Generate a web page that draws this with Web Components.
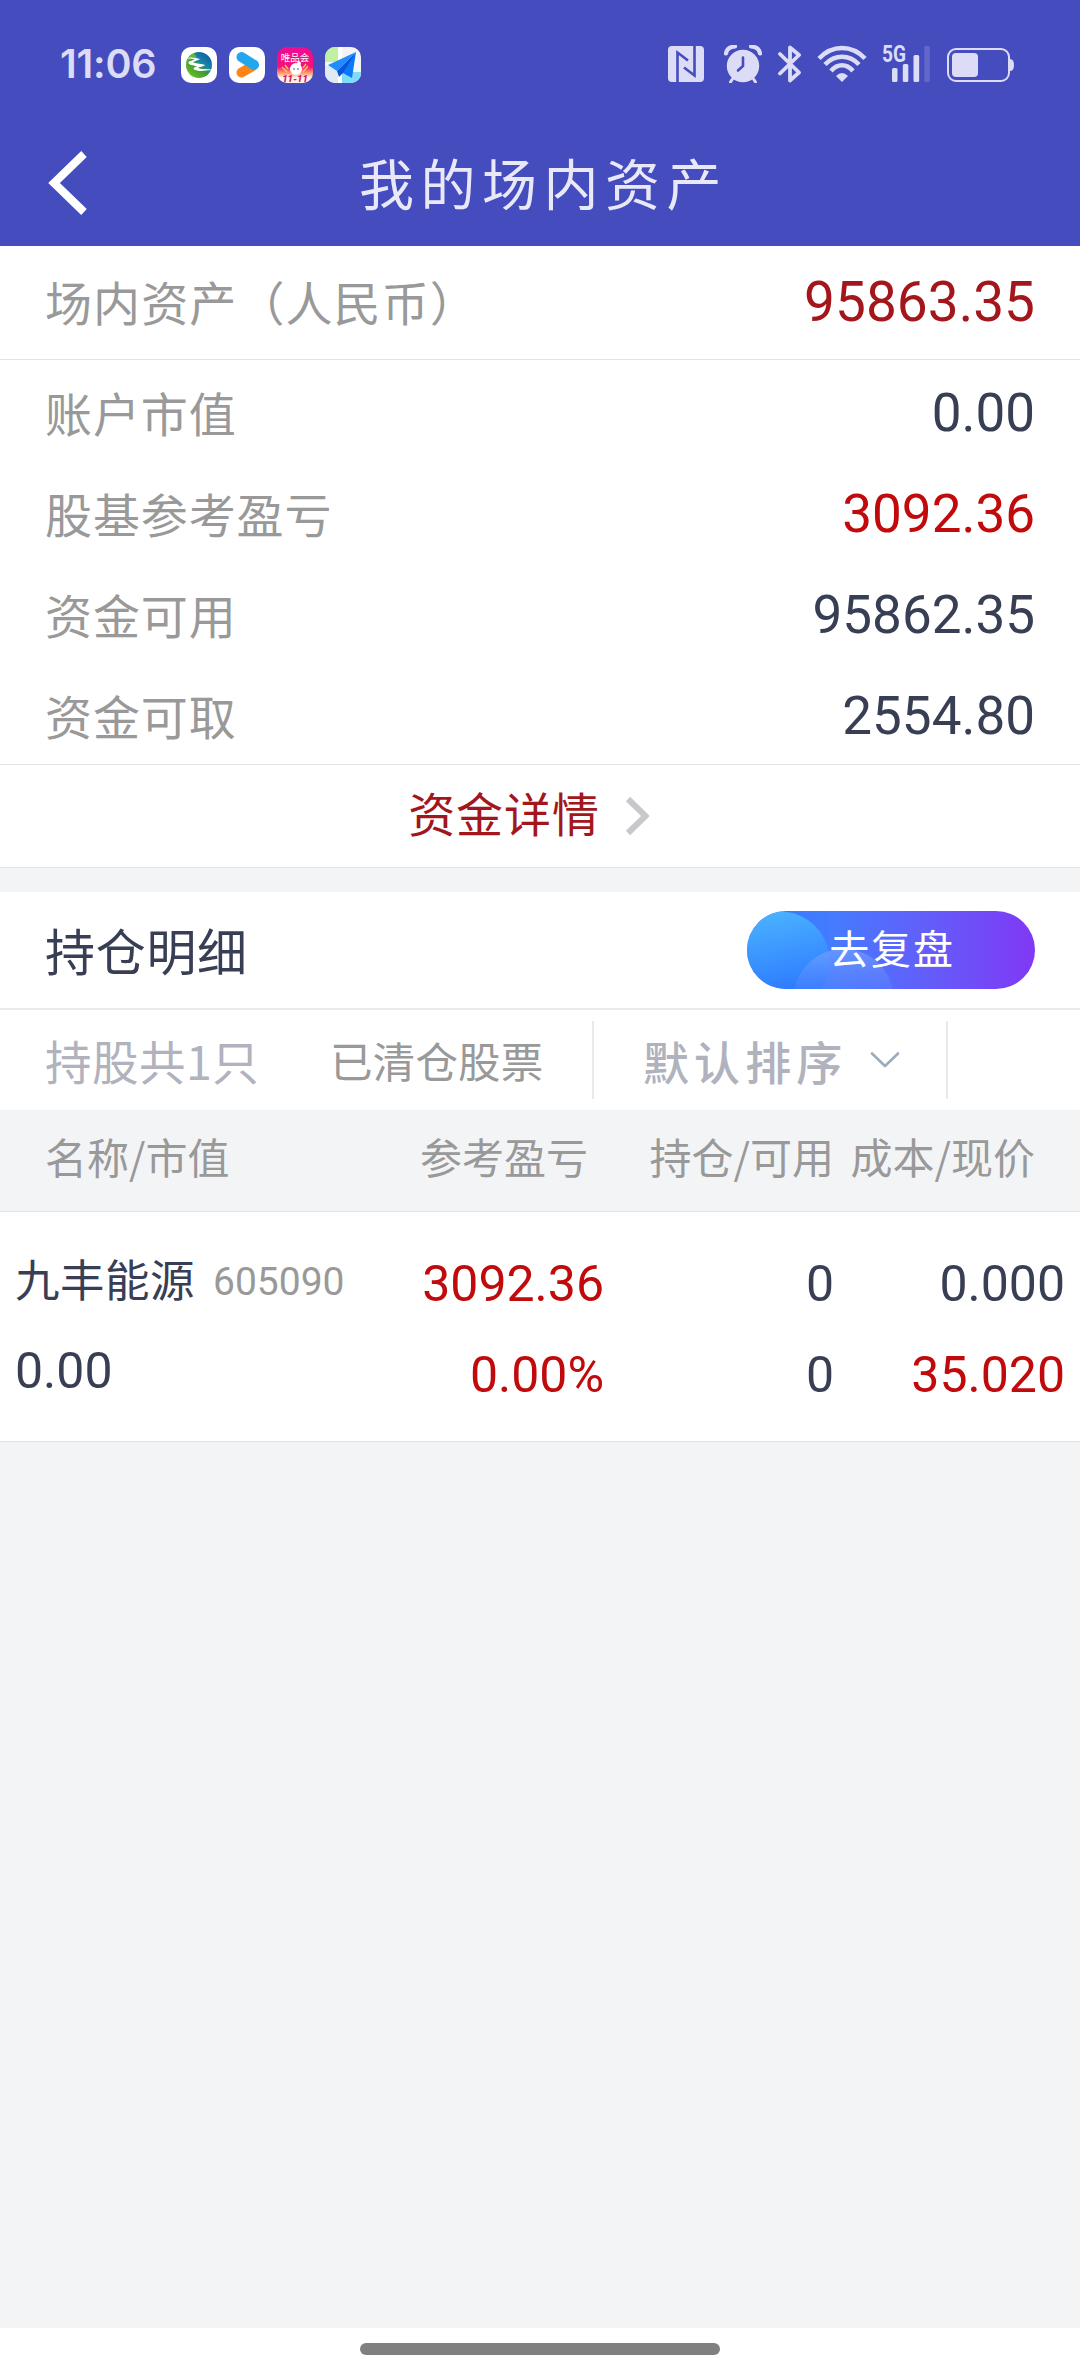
<!DOCTYPE html>
<html lang="zh-CN">
<head>
<meta charset="UTF-8">
<meta name="viewport" content="width=device-width, initial-scale=1.0">
<title>我的场内资产</title>
<style>
    :root {
        --primary: #444cbe;
        --label: #999999;
        --text: #383e54;
        --red: #c00a0c;
        --deep-red: #a3161b;
        --line: #e3e3e5;
        --bg: #f3f4f6;
        --num: Roboto, "Noto Sans CJK SC", sans-serif;
        --cjk: "Noto Sans CJK SC", sans-serif;
    }
    body {
        margin: 0;
        background: var(--bg);
        font-family: var(--cjk);
    }
</style>
</head>
<body>
<asset-page>
    <status-bar slot="top" data-time="11:06"></status-bar>
    <nav-bar slot="top">我的场内资产</nav-bar>

    <asset-row data-type="total" data-value="95863.35">场内资产（人民币）</asset-row>
    <asset-row data-value="0.00">账户市值</asset-row>
    <asset-row data-type="up" data-value="3092.36">股基参考盈亏</asset-row>
    <asset-row data-value="95862.35">资金可用</asset-row>
    <asset-row data-value="2554.80">资金可取</asset-row>
    <detail-link>资金详情</detail-link>

    <section-head>持仓明细<review-button slot="action">去复盘</review-button></section-head>
    <filter-bar>
        <span slot="count">持股共1只</span>
        <span slot="cleared">已清仓股票</span>
        <span slot="sort">默认排序</span>
    </filter-bar>
    <holding-head data-cols="名称/市值,参考盈亏,持仓/可用,成本/现价"></holding-head>
    <holding-row data-name="九丰能源" data-code="605090" data-market="0.00"
        data-profit="3092.36" data-rate="0.00%" data-hold="0" data-usable="0"
        data-cost="0.000" data-price="35.020"></holding-row>

    <home-indicator slot="bottom"></home-indicator>
</asset-page>

<script>
/** 页面骨架: 顶部 / 内容 / 底部 */
class AssetPage extends HTMLElement {
    constructor() {
        super();
        this.attachShadow({ mode: 'open' });
    }

    connectedCallback() {
        this.shadowRoot.innerHTML = `
            <style>
                :host {
                    display: flex;
                    flex-direction: column;
                    width: 1080px;
                    height: 2376px;
                    overflow: hidden;
                }
                main { flex: 1; }
            </style>
            <header><slot name="top"></slot></header>
            <main><slot></slot></main>
            <slot name="bottom"></slot>
        `;
    }
}

/** 系统状态栏，左侧时间和应用通知，右侧系统图标 */
class StatusBar extends HTMLElement {
    constructor() {
        super();
        this.attachShadow({ mode: 'open' });
    }

    connectedCallback() {
        this.render();
    }

    getAppsHTML() {
        return `
            <svg width="36" height="36" viewBox="0 0 36 36">
                <defs>
                    <linearGradient id="land" x1="1" y1="0" x2="0.2" y2="1">
                        <stop offset="0" stop-color="#0b4fa0"/><stop offset=".45" stop-color="#1b86a8"/>
                        <stop offset=".6" stop-color="#3c9a34"/><stop offset="1" stop-color="#6cc020"/>
                    </linearGradient>
                </defs>
                <rect width="36" height="36" rx="10" fill="#fff"/>
                <circle cx="18" cy="18" r="13" fill="url(#land)"/>
                <path d="M5 17A13 13 0 0 1 13 6L16 11L8 13Z" fill="#62b83a"/>
                <path d="M4 11.500C9 9.500 14 10.500 19 12C17 13.500 13 14 12 15.500C16 17 21 16.500 24 18C22 20 18 19.500 17 21C22 23 27 21 32 23.500C27 22.500 22 25 16 23.500C12 22.500 11 21 16 19.500C12 18 7 18 7.500 15.500C8 13.500 13 13.500 13.500 12.500C10 11.500 7 11 4 11.500Z" fill="#fff"/>
            </svg>
            <svg width="36" height="36" viewBox="0 0 36 36">
                <rect width="36" height="36" rx="10" fill="#fff"/>
                <path d="M12.500 25.500L23 19.500" stroke="#ff8413" stroke-width="10" stroke-linecap="round"/>
                <path d="M12.500 10L25 17.800" stroke="#22a7ee" stroke-width="10" stroke-linecap="round"/>
                <path d="M16 18L24 13Q30 17 29.800 19Q29 21 24.500 23.200Z" fill="#22a7ee"/>
            </svg>
            <svg width="36" height="36" viewBox="0 0 36 36">
                <defs>
                    <linearGradient id="vip" x1="0" y1="0" x2="0" y2="1">
                        <stop offset="0" stop-color="#ee0c94"/><stop offset=".55" stop-color="#f6107a"/>
                        <stop offset=".72" stop-color="#ff9a6a"/><stop offset=".85" stop-color="#fff2e0"/>
                    </linearGradient>
                </defs>
                <rect width="36" height="36" rx="10" fill="url(#vip)"/>
                <text x="18" y="13.500" text-anchor="middle" font-size="9.500" fill="#fff">唯品会</text>
                <path d="M5 20L10 25M8 18L11 22M31 19L26 25M29 17L26 21" stroke="#ffc35a" stroke-width="1.500"/>
                <circle cx="19" cy="22" r="6" fill="#fff"/>
                <circle cx="22" cy="16.500" r="2" fill="#fff"/>
                <circle cx="17" cy="22" r=".8" fill="#444"/><circle cx="21" cy="22" r=".8" fill="#444"/>
                <text x="18" y="35" text-anchor="middle" font-family="Roboto, sans-serif" font-style="italic" font-weight="900" font-size="9.500" fill="#d8107a">11-11</text>
            </svg>
            <svg width="36" height="36" viewBox="0 0 36 36">
                <defs><clipPath id="mapbox"><rect width="36" height="36" rx="10"/></clipPath></defs>
                <g clip-path="url(#mapbox)">
                    <rect width="36" height="36" fill="#f1f5f7"/>
                    <path d="M0 0H13V15H0Z" fill="#bff0a4"/>
                    <path d="M0 19H13V36H0Z" fill="#dfeaf2"/>
                    <path d="M17 25H36V36H17Z" fill="#7fdcf8"/>
                    <path d="M13 0H17V36H13Z" fill="#fff"/>
                    <path d="M31 5L3 18L12 24Z" fill="#1f8cff"/>
                    <path d="M31 5L16 25L27 31Z" fill="#0a78f8"/>
                    <path d="M31 5L12 24L14 30L18 26Z" fill="#0b56d8"/>
                </g>
            </svg>
        `;
    }

    getSystemHTML() {
        return `
            <svg class="nfc" width="36" height="36" viewBox="0 0 36 36">
                <rect width="36" height="36" rx="4" fill="currentColor"/>
                <path d="M9.500 36V6.500L20 14.500M26.500 0V29.500L16 21.500" fill="none" stroke="#444cbe" stroke-width="2.600"/>
            </svg>
            <svg class="alarm" width="38" height="38" viewBox="0 0 38 38">
                <path d="M2 8.500Q3 2 11 1.500M36 8.500Q35 2 27 1.500" fill="none" stroke="currentColor" stroke-width="4.200" stroke-linecap="round"/>
                <path d="M8.500 34L6.500 37M29.500 34L31.500 37" stroke="currentColor" stroke-width="3" stroke-linecap="round"/>
                <circle cx="19" cy="21" r="16.200" fill="currentColor"/>
                <path d="M19 12.500V21L14 25.500" fill="none" stroke="#444cbe" stroke-width="2.600" stroke-linecap="round"/>
            </svg>
            <svg class="bt" width="24" height="38" viewBox="0 0 24 38">
                <path d="M2 9L21 27.500L12 35.500V2.500L21 10L2 28.500" fill="none" stroke="currentColor" stroke-width="3.800" stroke-linecap="round" stroke-linejoin="round"/>
            </svg>
            <svg class="wifi" width="50" height="38" viewBox="0 0 50 38">
                <g fill="none" stroke="currentColor" stroke-width="4.600">
                    <path d="M2 13.500Q12 3 25 3T48 13.500"/>
                    <path d="M8 19.500Q15.500 11.800 25 11.800T42 19.500"/>
                    <path d="M14 26Q19 20.300 25 20.300T36 26"/>
                </g>
                <path d="M19 31Q25 25 31 31L25 37Z" fill="currentColor"/>
            </svg>
            <svg class="cell" width="50" height="48" viewBox="0 -10 50 48">
                <text x="0" y="17.500" font-family="Roboto, sans-serif" font-weight="700" font-size="23" textLength="24" lengthAdjust="spacingAndGlyphs" fill="currentColor">5G</text>
                <g fill="currentColor">
                    <rect x="10" y="24" width="5.500" height="14" rx="1.500"/>
                    <rect x="20.800" y="20" width="5.500" height="18" rx="1.500"/>
                    <rect x="31.500" y="11" width="5.700" height="27" rx="1.500"/>
                    <rect x="42.300" y="2" width="5.500" height="36" rx="1.500" opacity=".2"/>
                </g>
            </svg>
            <svg class="battery" width="68" height="34" viewBox="0 0 68 34">
                <rect x="1" y="1" width="61" height="32" rx="8" fill="none" stroke="currentColor" stroke-width="2"/>
                <rect x="5" y="5" width="26" height="24" rx="4" fill="currentColor"/>
                <path d="M63 11Q67 11 67 17T63 23Z" fill="currentColor"/>
            </svg>
        `;
    }

    render() {
        this.shadowRoot.innerHTML = `
            <style>
                :host {
                    display: flex;
                    justify-content: space-between;
                    align-items: flex-start;
                    box-sizing: border-box;
                    height: 122px;
                    padding: 45px 65px 0 60px;
                    background: var(--primary);
                    color: #dcdcf6;
                }
                svg { display: block; }
                .left, .right { display: flex; }
                .time {
                    width: 121px;
                    font: 600 39.500px/38px Inter, sans-serif;
                    letter-spacing: -0.200px;
                }
                .apps {
                    display: flex;
                    gap: 12px;
                    padding-top: 2px;
                }
                .nfc { margin: 1px 20px 0 0; }
                .alarm { margin-right: 16px; }
                .bt { margin-right: 15px; }
                .wifi { margin-right: 15px; }
                .cell { margin-right: 15px; margin-top: -11px; }
                .battery { margin-top: 3px; }
            </style>
            <div class="left">
                <div class="time">${this.dataset.time}</div>
                <div class="apps">${this.getAppsHTML()}</div>
            </div>
            <div class="right">${this.getSystemHTML()}</div>
        `;
    }
}

/** 标题栏 */
class NavBar extends HTMLElement {
    constructor() {
        super();
        this.attachShadow({ mode: 'open' });
    }

    connectedCallback() {
        this.shadowRoot.innerHTML = `
            <style>
                :host {
                    display: grid;
                    grid-template-columns: 120px 1fr 120px;
                    height: 124px;
                    background: var(--primary);
                    color: #e8e8f8;
                }
                svg { margin: 29px 0 0 48px; }
                .title {
                    text-align: center;
                    font-size: 55px;
                    line-height: 118px;
                    letter-spacing: 6.500px;
                    text-indent: 7px;
                }
            </style>
            <svg width="40" height="64" viewBox="0 0 40 64">
                <path d="M36 3L6 32L36 61" fill="none" stroke="#fff" stroke-width="8"/>
            </svg>
            <div class="title"><slot></slot></div>
        `;
    }
}

/**
 * 资产行
 * data-type: total 总资产 / up 盈利
 */
class AssetRow extends HTMLElement {
    constructor() {
        super();
        this.attachShadow({ mode: 'open' });
    }

    connectedCallback() {
        this.shadowRoot.innerHTML = `
            <style>
                :host {
                    display: flex;
                    justify-content: space-between;
                    height: 101px;
                    padding: 0 45px;
                    background: #fff;
                    line-height: 101px;
                }
                :host([data-type="total"]) {
                    height: 113px;
                    line-height: 113px;
                    border-bottom: 1px solid var(--line);
                }
                .label {
                    padding-top: 1px;
                    font-size: 47px;
                    letter-spacing: 0.900px;
                    color: var(--label);
                }
                .value {
                    padding-top: 3px;
                    font-family: var(--num);
                    font-size: 53px;
                    color: var(--text);
                }
                :host([data-type="total"]) .label {
                    padding-top: 0;
                    line-height: 110px;
                    letter-spacing: 1.100px;
                }
                :host([data-type="total"]) .value {
                    padding-top: 0;
                    font-size: 55px;
                    color: var(--deep-red);
                }
                :host([data-type="up"]) .value { color: var(--red); }
            </style>
            <span class="label"><slot></slot></span>
            <span class="value">${this.dataset.value}</span>
        `;
    }
}

/** 资金详情入口 */
class DetailLink extends HTMLElement {
    constructor() {
        super();
        this.attachShadow({ mode: 'open' });
    }

    connectedCallback() {
        this.shadowRoot.innerHTML = `
            <style>
                :host {
                    display: flex;
                    justify-content: center;
                    align-items: center;
                    gap: 25px;
                    height: 102px;
                    margin-bottom: 24px;
                    padding-right: 21px;
                    border: solid var(--line);
                    border-width: 1px 0;
                    background: #fff;
                    color: var(--deep-red);
                    font-size: 47px;
                    letter-spacing: 0.900px;
                }
                span {
                    line-height: 94px;
                    padding-bottom: 8px;
                }
            </style>
            <span><slot></slot></span>
            <svg width="26" height="40" viewBox="0 0 26 40">
                <path d="M3 3L20.500 20L3 37" fill="none" stroke="#c7c7cc" stroke-width="6"/>
            </svg>
        `;
    }
}

/** 区块标题 */
class SectionHead extends HTMLElement {
    constructor() {
        super();
        this.attachShadow({ mode: 'open' });
    }

    connectedCallback() {
        this.shadowRoot.innerHTML = `
            <style>
                :host {
                    display: flex;
                    justify-content: space-between;
                    align-items: center;
                    height: 116px;
                    padding: 0 45px;
                    border-bottom: 2px solid #e6eaee;
                    background: #fff;
                    color: var(--text);
                    font-size: 50px;
                    letter-spacing: 0.700px;
                }
                .title {
                    line-height: 114px;
                    padding-bottom: 2px;
                }
            </style>
            <span class="title"><slot></slot></span>
            <slot name="action"></slot>
        `;
    }
}

/** 渐变胶囊按钮，左侧两个半透明圆 */
class ReviewButton extends HTMLElement {
    constructor() {
        super();
        this.attachShadow({ mode: 'open' });
    }

    connectedCallback() {
        this.shadowRoot.innerHTML = `
            <style>
                :host {
                    display: grid;
                    width: 288px;
                    height: 78px;
                    border-radius: 39px;
                    overflow: hidden;
                    color: #fff;
                }
                svg, span { grid-area: 1 / 1; }
                span {
                    z-index: 1;
                    text-align: center;
                    font-size: 40px;
                    line-height: 73px;
                    letter-spacing: 1.800px;
                    text-indent: 2px;
                }
            </style>
            <svg width="288" height="78" viewBox="0 0 288 78">
                <defs>
                    <linearGradient id="bg"><stop offset="0" stop-color="#2f7bff"/><stop offset=".3" stop-color="#457bff"/><stop offset=".6" stop-color="#6160fa"/><stop offset="1" stop-color="#8038f5"/></linearGradient>
                    <linearGradient id="c1" x1="0.4" y1="0" x2="0.6" y2="1"><stop offset="0" stop-color="#4ab2ff"/><stop offset=".8" stop-color="#2f7bff"/></linearGradient>
                    <linearGradient id="c2" x1="0" y1="0" x2="0" y2=".5"><stop offset="0" stop-color="#78a4ff" stop-opacity=".65"/><stop offset="1" stop-color="#5580ff" stop-opacity=".25"/></linearGradient>
                </defs>
                <rect width="288" height="78" fill="url(#bg)"/>
                <circle cx="33" cy="50" r="49.500" fill="url(#c1)"/>
                <circle cx="96.500" cy="88" r="50" fill="url(#c2)"/>
            </svg>
            <span><slot></slot></span>
        `;
    }
}

/** 筛选栏 */
class FilterBar extends HTMLElement {
    constructor() {
        super();
        this.attachShadow({ mode: 'open' });
    }

    connectedCallback() {
        this.shadowRoot.innerHTML = `
            <style>
                :host {
                    display: grid;
                    grid-template-columns: 285px 262px 356px 1fr;
                    align-items: center;
                    height: 100px;
                    padding-left: 45px;
                    background: #fff;
                    line-height: 98px;
                    color: #b0b2bd;
                }
                .count { font-size: 46.500px; letter-spacing: 0.500px; }
                .cleared {
                    font-size: 42.500px;
                    line-height: 100px;
                    letter-spacing: 0.200px;
                    color: var(--label);
                }
                .sort {
                    box-sizing: border-box;
                    display: flex;
                    align-items: center;
                    gap: 23px;
                    height: 78px;
                    padding-left: 49px;
                    border: solid #e6eaee;
                    border-width: 0 2px;
                    font-size: 46px;
                    font-weight: 500;
                    letter-spacing: 5.100px;
                }
            </style>
            <span class="count"><slot name="count"></slot></span>
            <span class="cleared"><slot name="cleared"></slot></span>
            <div class="sort">
                <slot name="sort"></slot>
                <svg width="30" height="18" viewBox="0 0 30 18">
                    <path d="M2 2.500L15 15L28 2.500" fill="none" stroke="#9eabbb" stroke-width="2.600" stroke-linecap="round" stroke-linejoin="round"/>
                </svg>
            </div>
        `;
    }
}

/** 持仓表头 */
class HoldingHead extends HTMLElement {
    constructor() {
        super();
        this.attachShadow({ mode: 'open' });
    }

    connectedCallback() {
        const cols = this.dataset.cols.split(',');
        this.shadowRoot.innerHTML = `
            <style>
                :host {
                    display: grid;
                    grid-template-columns: 1fr 245px 246px 201px;
                    height: 101px;
                    padding: 0 45px;
                    border-bottom: 1px solid var(--line);
                    background: var(--bg);
                    color: var(--label);
                    font-size: 42px;
                    line-height: 92px;
                    text-align: right;
                }
                span:first-of-type { text-align: left; }
            </style>
            ${cols.map(col => `<span>${col}</span>`).join('')}
        `;
    }
}

/** 单只持仓，每列上下两个值 */
class HoldingRow extends HTMLElement {
    constructor() {
        super();
        this.attachShadow({ mode: 'open' });
    }

    connectedCallback() {
        const d = this.dataset;
        this.shadowRoot.innerHTML = `
            <style>
                :host {
                    display: grid;
                    grid-template-columns: 350px 239px 230px 1fr;
                    height: 229px;
                    padding: 0 15px;
                    border-bottom: 1px solid var(--line);
                    background: #fff;
                    color: var(--text);
                    font-family: var(--num);
                    font-size: 50px;
                }
                .col {
                    display: flex;
                    flex-direction: column;
                    padding-top: 27px;
                    line-height: 91px;
                    text-align: right;
                }
                .first {
                    padding-top: 25px;
                    line-height: 86px;
                    text-align: left;
                }
                .name {
                    display: flex;
                    gap: 18px;
                    font-family: var(--cjk);
                    font-size: 44.500px;
                    letter-spacing: 0.500px;
                }
                .name span { line-height: 81px; }
                .name .code {
                    font-family: var(--num);
                    font-size: 39px;
                    line-height: 91px;
                    letter-spacing: 0;
                    color: var(--label);
                }
                .up { color: var(--red); }
            </style>
            <div class="col first">
                <div class="name"><span>${d.name}</span><span class="code">${d.code}</span></div>
                <span>${d.market}</span>
            </div>
            <div class="col up"><span>${d.profit}</span><span>${d.rate}</span></div>
            <div class="col"><span>${d.hold}</span><span>${d.usable}</span></div>
            <div class="col"><span>${d.cost}</span><span class="up">${d.price}</span></div>
        `;
    }
}

/** 底部手势条 */
class HomeIndicator extends HTMLElement {
    constructor() {
        super();
        this.attachShadow({ mode: 'open' });
    }

    connectedCallback() {
        this.shadowRoot.innerHTML = `
            <style>
                :host {
                    display: flex;
                    justify-content: center;
                    box-sizing: border-box;
                    height: 48px;
                    padding-top: 15px;
                    background: #fff;
                }
                div {
                    width: 360px;
                    height: 12px;
                    border-radius: 6px;
                    background: #808080;
                }
            </style>
            <div></div>
        `;
    }
}

customElements.define('asset-page', AssetPage);
customElements.define('status-bar', StatusBar);
customElements.define('nav-bar', NavBar);
customElements.define('asset-row', AssetRow);
customElements.define('detail-link', DetailLink);
customElements.define('section-head', SectionHead);
customElements.define('review-button', ReviewButton);
customElements.define('filter-bar', FilterBar);
customElements.define('holding-head', HoldingHead);
customElements.define('holding-row', HoldingRow);
customElements.define('home-indicator', HomeIndicator);
</script>
</body>
</html>
